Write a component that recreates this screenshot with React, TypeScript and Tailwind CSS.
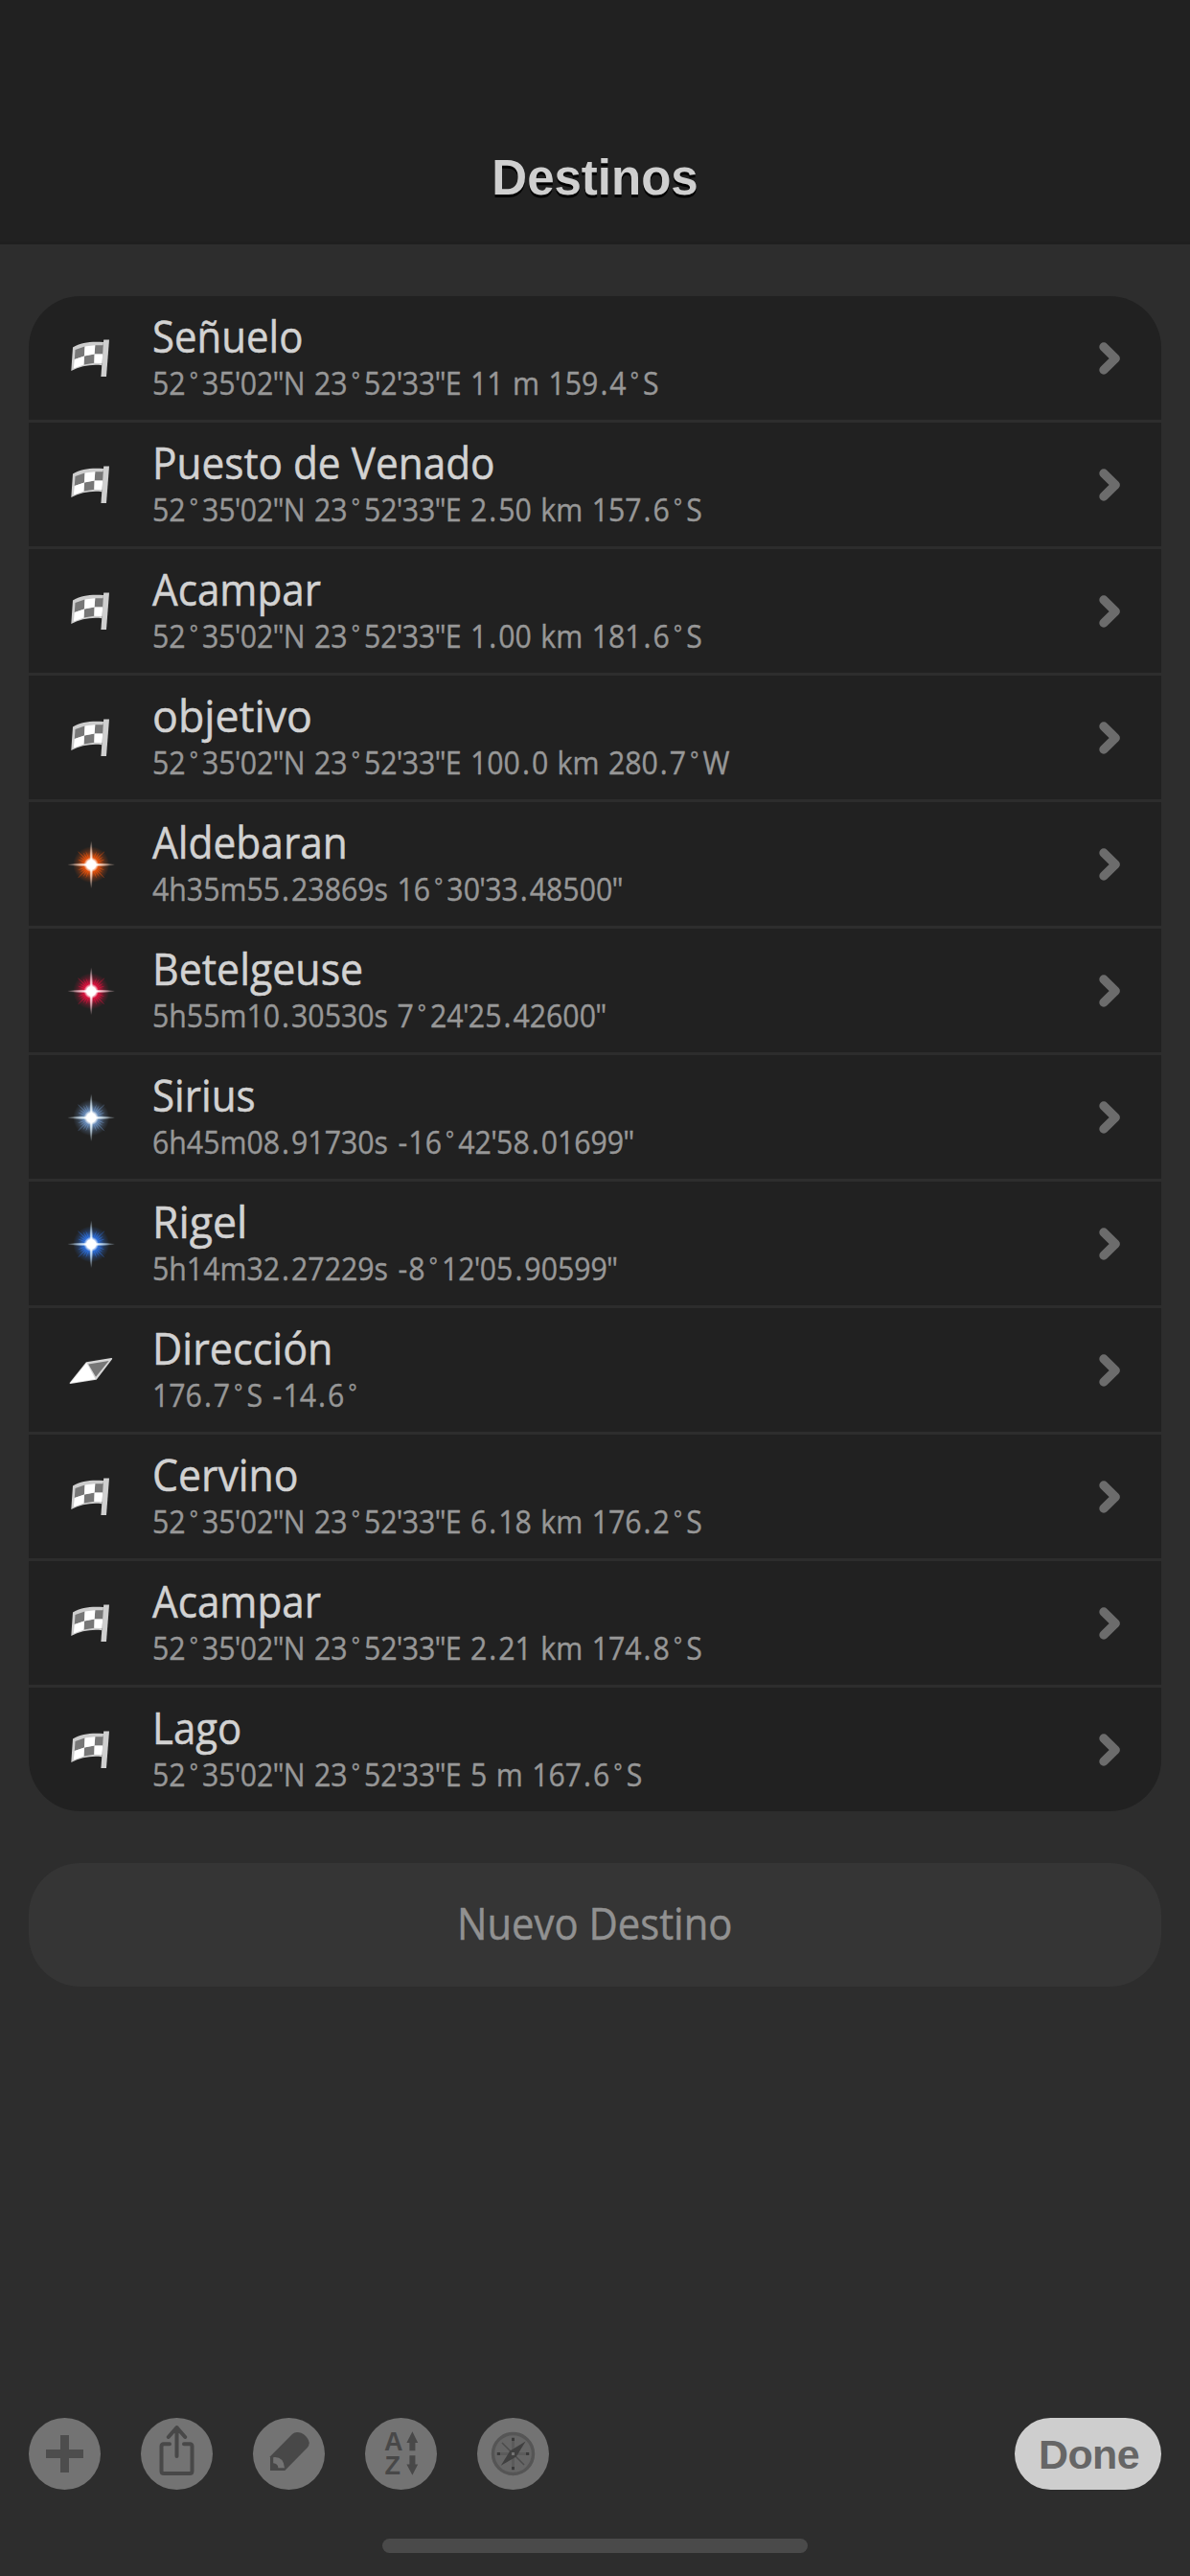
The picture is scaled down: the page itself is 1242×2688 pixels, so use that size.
import type { ReactNode } from "react";

type IconKind = "flag" | "orange" | "red" | "white" | "blue" | "needle";

interface IDestination {
  name: string;
  detail: string;
  icon: IconKind;
  /** horizontal squeeze applied to the name */
  fit: string;
}

const destinations: IDestination[] = [
  { name: "Señuelo", detail: "52°35'02\"N 23°52'33\"E 11 m 159.4°S", icon: "flag", fit: "scale-x-[0.932]" },
  { name: "Puesto de Venado", detail: "52°35'02\"N 23°52'33\"E 2.50 km 157.6°S", icon: "flag", fit: "scale-x-[0.941]" },
  { name: "Acampar", detail: "52°35'02\"N 23°52'33\"E 1.00 km 181.6°S", icon: "flag", fit: "scale-x-[0.938]" },
  { name: "objetivo", detail: "52°35'02\"N 23°52'33\"E 100.0 km 280.7°W", icon: "flag", fit: "scale-x-[0.993]" },
  { name: "Aldebaran", detail: "4h35m55.23869s 16°30'33.48500\"", icon: "orange", fit: "scale-x-[0.943]" },
  { name: "Betelgeuse", detail: "5h55m10.30530s 7°24'25.42600\"", icon: "red", fit: "scale-x-[0.953]" },
  { name: "Sirius", detail: "6h45m08.91730s -16°42'58.01699\"", icon: "white", fit: "scale-x-[0.937]" },
  { name: "Rigel", detail: "5h14m32.27229s -8°12'05.90599\"", icon: "blue", fit: "scale-x-[0.992]" },
  { name: "Dirección", detail: "176.7°S -14.6°", icon: "needle", fit: "scale-x-[0.958]" },
  { name: "Cervino", detail: "52°35'02\"N 23°52'33\"E 6.18 km 176.2°S", icon: "flag", fit: "scale-x-[0.950]" },
  { name: "Acampar", detail: "52°35'02\"N 23°52'33\"E 2.21 km 174.8°S", icon: "flag", fit: "scale-x-[0.938]" },
  { name: "Lago", detail: "52°35'02\"N 23°52'33\"E 5 m 167.6°S", icon: "flag", fit: "scale-x-[0.932]" },
];

const starColors: Record<string, { glow: string; ray: string }> = {
  orange: { glow: "#f4560c", ray: "#ffd9c4" },
  red: { glow: "#ea1240", ray: "#ffd0da" },
  white: { glow: "#6f94c4", ray: "#d8ecf8" },
  blue: { glow: "#2f74e6", ray: "#c8e4fa" },
};

const FlagIcon = () => (
  <svg viewBox="0 0 50 50" className="size-[50px]">
    <path d="M6 13.5C15 8 26 7 38 8L36.3 32.2C25 31 14 33 4.3 38Z" fill="#cdcdcd" />
    <path d="M8.5 16L18.5 12.5L18 22.5L7.8 26ZM29.3 11.2H38.3L37.3 20.5H28.6ZM18 22.5L28.6 20.5L28.3 29.8L17.5 31.5Z" fill="#777" />
    <path d="M18.5 12.5L29.3 11.2L28.6 20.5L18 22.5ZM7.8 26L18 22.5L17.5 31.5L6.8 35.5ZM28.6 20.5H37.3L36.6 30L28.3 29.8Z" fill="#fff" />
    <path d="M38.2 5.5H44L41 44H35.4Z" fill="#cfcfcf" />
  </svg>
);

const NeedleIcon = () => (
  <svg viewBox="0 0 50 50" className="size-[50px]">
    <path d="M3.4 38.2L20.4 17L46.4 12.8L30.2 34Z" fill="#d6d6d6" stroke="#d6d6d6" strokeWidth="1.6" strokeLinejoin="round" />
    <path d="M3.4 38.2L20.4 17L29.5 34Z" fill="#fff" />
    <path d="M22.2 18.4L43.6 15L30 31.8Z" fill="#777" />
  </svg>
);

const StarIcon = ({ kind }: { kind: string }) => {
  const { glow, ray } = starColors[kind];
  const rays = [22, 34, 45, 56, 68, 112, 124, 135, 146, 158];
  return (
    <svg viewBox="0 0 50 50" className="size-[50px]">
      <defs>
        <radialGradient id={`glow-${kind}`}>
          <stop offset="0" stopColor={glow} />
          <stop offset="0.42" stopColor={glow} stopOpacity="0.85" />
          <stop offset="0.72" stopColor={glow} stopOpacity="0.28" />
          <stop offset="1" stopColor={glow} stopOpacity="0" />
        </radialGradient>
        <radialGradient id={`ray-${kind}`}>
          <stop offset="0.2" stopColor="#fff" />
          <stop offset="0.6" stopColor={ray} stopOpacity="0.7" />
          <stop offset="1" stopColor={ray} stopOpacity="0.1" />
        </radialGradient>
        <radialGradient id={`core-${kind}`}>
          <stop offset="0.6" stopColor="#fff" />
          <stop offset="1" stopColor="#fff" stopOpacity="0" />
        </radialGradient>
      </defs>
      <circle cx="25.2" cy="25.3" r="19" fill={`url(#glow-${kind})`} />
      {rays.map((angle) => (
        <ellipse key={angle} cx="25.2" cy="25.3" rx={angle % 45 === 0 ? 20 : 15} ry="0.6"
          fill={glow} opacity="0.6" transform={`rotate(${angle} 25.2 25.3)`} />
      ))}
      <ellipse cx="25.2" cy="25.3" rx="24.5" ry="1.9" fill={`url(#ray-${kind})`} />
      <ellipse cx="25.2" cy="25.3" rx="1.9" ry="24.5" fill={`url(#ray-${kind})`} />
      <circle cx="25.2" cy="25.3" r="7.8" fill={`url(#core-${kind})`} />
    </svg>
  );
};

const RowIcon = ({ kind }: { kind: IconKind }) => {
  if (kind === "flag") {
    return <FlagIcon />;
  }
  if (kind === "needle") {
    return <NeedleIcon />;
  }
  return <StarIcon kind={kind} />;
};

// punctuation gets its own side bearings, the degree sign is as wide as a digit
const glyphStyles: Record<string, string> = {
  "°": "inline-block w-[18.9px] text-center text-[23px] leading-none align-[7px]",
  ".": "mx-[2.2px]",
  "-": "mx-[1.2px]",
  "'": "-mx-[0.8px]",
  '"': "-mx-[0.9px]",
};

const Detail = ({ text }: { text: string }) => (
  <p className="mt-[6px] h-10 w-max origin-left scale-x-[0.917] text-[33px] leading-10 [word-spacing:1.7px] whitespace-nowrap text-[#979797] [-webkit-text-stroke:0.4px_#979797]">
    {text.split(/([°.'"-])/).map((part, index) =>
      glyphStyles[part] ? <span key={index} className={glyphStyles[part]}>{part}</span> : part
    )}
  </p>
);

const Row = ({ destination }: { destination: IDestination }) => (
  <li className="flex h-[129px] items-center bg-[#212121] pr-[43px] pl-10">
    <RowIcon kind={destination.icon} />
    <div className="ml-[39px] h-full flex-1 pt-[19px]">
      <h2 className={`w-max origin-left text-[45px] leading-[46px] text-[#d2d2d2] [-webkit-text-stroke:0.5px_#d2d2d2] ${destination.fit}`}>
        {destination.name}
      </h2>
      <Detail text={destination.detail} />
    </div>
    <svg viewBox="0 0 22 34" className="h-[34px] w-[22px]">
      <path d="M5 5L17.2 17L5 29" fill="none" stroke="#6c6c6c" strokeWidth="9.4" strokeLinecap="round" strokeLinejoin="round" />
    </svg>
  </li>
);

const ToolButton = ({ label, children }: { label: string; children: ReactNode }) => (
  <button aria-label={label} className="size-[75px] rounded-full bg-[#737373]">
    <svg viewBox="0 0 75 75" className="size-full">{children}</svg>
  </button>
);

export default function App() {
  return (
    <div className="flex h-[2688px] w-[1242px] flex-col bg-[#2d2d2d] font-['Open_Sans','Noto_Sans',sans-serif]">
      <header className="flex h-[255px] justify-center border-b-[3px] border-[#1f1f1f] bg-[#212121] pt-[157px]">
        <h1 className="font-['Liberation_Sans',Arial,sans-serif] text-[51px] leading-[58px] font-bold text-[#cfcfcf] [text-shadow:0_3px_0_#000]">
          Destinos
        </h1>
      </header>

      <main className="flex flex-1 flex-col px-[30px] pt-[54px]">
        <ul className="flex flex-col gap-[3px] overflow-hidden rounded-[54px]">
          {destinations.map((destination, index) => (
            <Row key={index} destination={destination} />
          ))}
        </ul>
        <button className="mt-[54px] flex h-[129px] items-center justify-center rounded-[54px] bg-[#353535] pb-[4px] text-[45px] text-[#919191] [-webkit-text-stroke:0.5px_#919191]">
          <span className="scale-x-[0.929]">Nuevo Destino</span>
        </button>
      </main>

      <footer className="flex h-[165px] flex-col px-[30px]">
        <div className="flex items-center gap-[42px]">
          <ToolButton label="Add">
            <path d="M33 18H42V33H57V42H42V57H33V42H18V33H33Z" fill="#4d4d4d" />
          </ToolButton>
          <ToolButton label="Share">
            <g fill="none" stroke="#484848" strokeWidth="4" strokeLinecap="round" strokeLinejoin="round">
              <path d="M30 27.3H24Q21.5 27.3 21.5 29.8V55.4Q21.5 57.9 24 57.9H51Q53.5 57.9 53.5 55.4V29.8Q53.5 27.3 51 27.3H45" />
              <path d="M37.5 40V10M28.8 20L37.5 10L46.2 20" />
            </g>
          </ToolButton>
          <ToolButton label="Edit">
            <path d="M18 55V40.3L41 17Q44.5 13.6 50.5 15.8Q57 18.8 58.7 25.5Q59 28.8 56.6 31.3L33.3 55Z" fill="#484848" />
            <path d="M21.2 41.2Q32 40 33 52.3H26.4Q26.2 47.8 21.2 47.2Z" fill="#737373" />
          </ToolButton>
          <ToolButton label="Sort">
            <g fill="#484848">
              <text x="20" y="34" className="font-['Liberation_Sans',Arial,sans-serif] text-[27px] font-bold">A</text>
              <text x="20.6" y="58.7" className="font-['Liberation_Sans',Arial,sans-serif] text-[27px] font-bold">Z</text>
              <path d="M49.4 14.3L55.2 26H52.4V34.2H46.4V26H43.4Z" />
              <path d="M49.4 59.8L55.2 48.5H52.4V39.2H46.4V48.5H43.4Z" />
            </g>
          </ToolButton>
          <ToolButton label="Compass">
            <circle cx="37.5" cy="37.5" r="21" fill="#666" stroke="#555" strokeWidth="3.4" />
            <path d="M37.5 20V55M20 37.5H55" stroke="#5b5b5b" strokeWidth="3" />
            <path d="M26 26L49 49" stroke="#4c4c4c" strokeWidth="1.6" />
            <path d="M24.8 49.8L34.2 34.5L50.6 24.6L40.8 40.6Z" fill="#404040" />
            <path d="M36 21H39V24H36ZM36 51H39V54H36ZM21 36H24V39H21ZM51 36H54V39H51Z" fill="#3a3a3a" />
            <path d="M36 36H39V39H36Z" fill="#737373" />
          </ToolButton>
          <button className="ml-auto flex h-[75px] w-[153px] items-center justify-center rounded-full bg-[#cecece] pl-[2px] font-['Liberation_Sans',Arial,sans-serif] text-[43px] leading-[50px] font-bold tracking-[-0.6px] text-[#666]">
            Done
          </button>
        </div>
        <div className="mx-auto mt-[51px] h-[15px] w-[444px] rounded-full bg-[#4a4a4a]" />
      </footer>
    </div>
  );
}
